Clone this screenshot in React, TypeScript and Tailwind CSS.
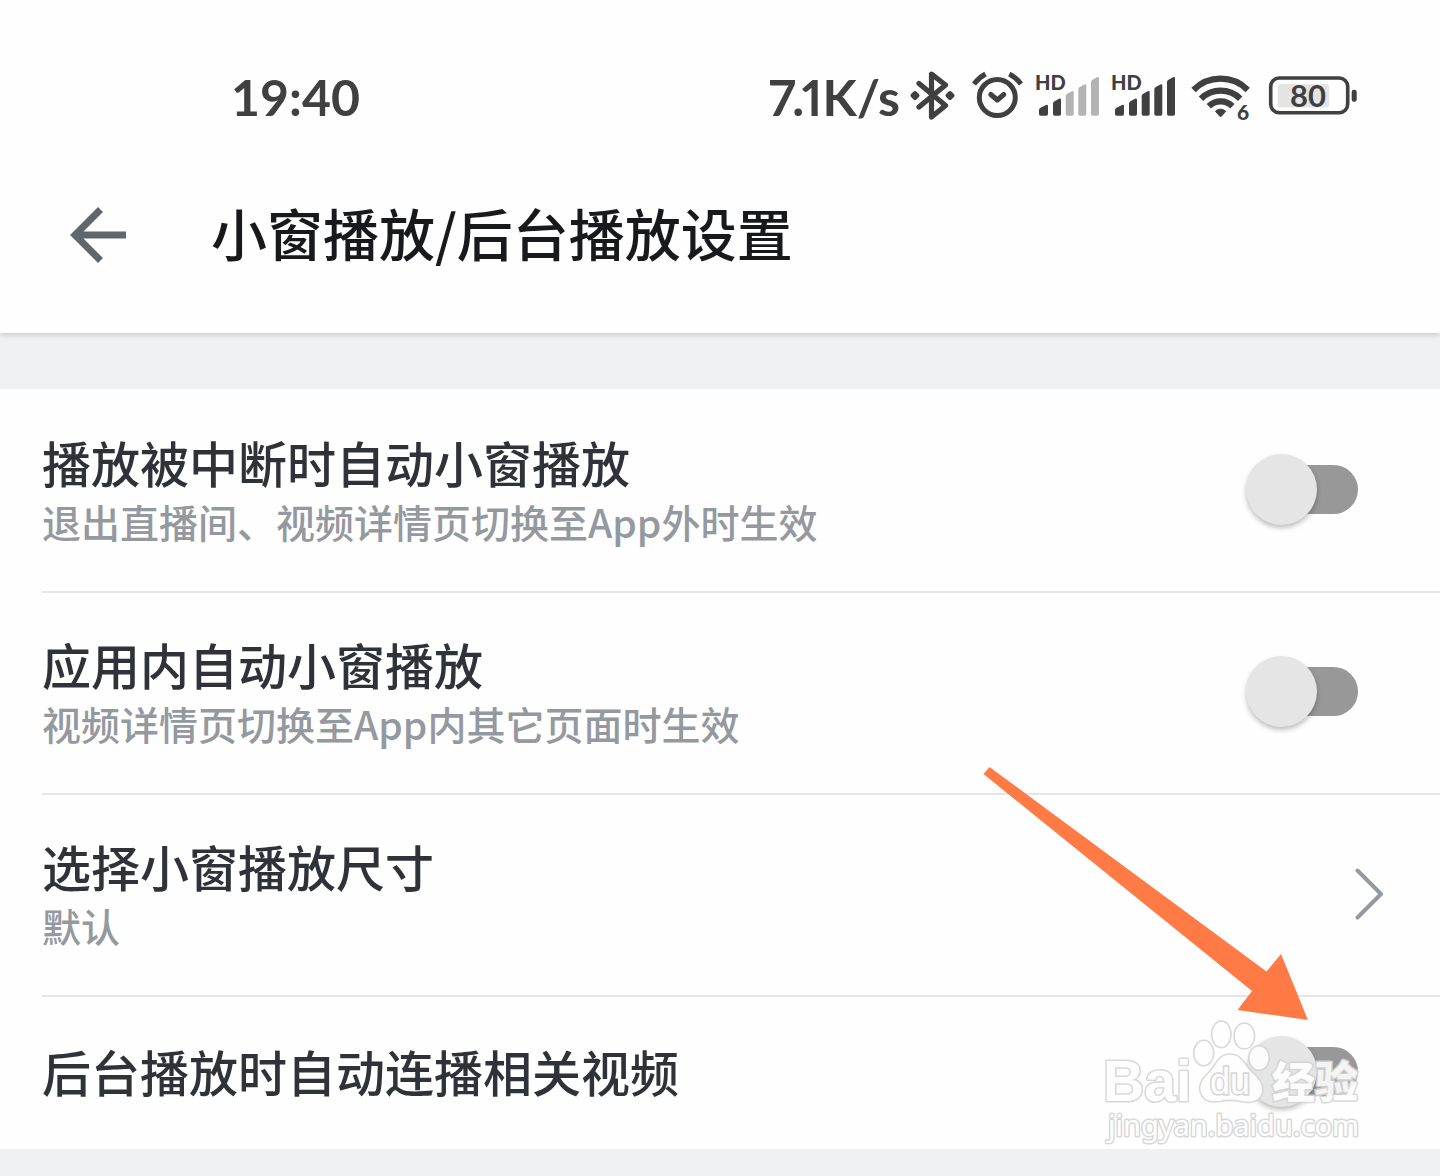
import { useId, useState } from "react";

function BluetoothIcon() {
  return (
    <svg width="54" height="56" viewBox="0 0 54 56" fill="none" aria-hidden="true">
      <path
        d="M11 14.5 37.5 36.5 23.5 48V5L37.5 16 11 38"
        stroke="#404040"
        strokeWidth="5.2"
        strokeLinecap="round"
        strokeLinejoin="round"
      />
      <path
        d="M7 24 9.500 26.500 7 29 4.500 26.500ZM42 24 44.500 26.500 42 29 39.500 26.500Z"
        fill="#404040"
        stroke="#404040"
        strokeWidth="4"
        strokeLinejoin="round"
      />
    </svg>
  );
}

function AlarmIcon() {
  return (
    <svg
      width="58"
      height="56"
      viewBox="0 0 58 56"
      fill="none"
      stroke="#404040"
      strokeWidth="5"
      strokeLinecap="round"
      strokeLinejoin="round"
      aria-hidden="true"
    >
      <circle cx="27.3" cy="28.6" r="18" />
      <path d="M20.8 25.5 27.3 31 33.8 25.5" />
      <path d="M4 15Q9 8.500 15.500 5M39.300 5Q46 8.500 51 15" strokeLinecap="butt" />
    </svg>
  );
}

const bars = [
  "M3 41 Q3 39.500 4.500 38.800L10 36Q12 35.300 12 37V45Q12 46.700 10.300 46.700H4.700Q3 46.700 3 45Z",
  "M17 34.500Q17 33 18.500 32.200L23 29.800Q25 29 25 31V45Q25 46.700 23.300 46.700H18.700Q17 46.700 17 45Z",
  "M29.700 27Q29.700 25.500 31.200 24.700L35.700 22.200Q37.700 21.400 37.700 23.400V45Q37.700 46.700 36 46.700H31.400Q29.700 46.700 29.700 45Z",
  "M42.300 20.400Q42.300 18.900 43.800 18.100L48.300 15.600Q50.300 14.800 50.300 16.800V45Q50.300 46.700 48.600 46.700H44Q42.300 46.700 42.300 45Z",
  "M55 13Q55 11.500 56.500 10.700L61 8.200Q63 7.400 63 9.400V45Q63 46.700 61.300 46.700H56.700Q55 46.700 55 45Z",
];

function SignalIcon({ level }: { level: number }) {
  return (
    <svg width="68" height="56" viewBox="0 0 68 56" aria-hidden="true">
      <text x="-1" y="21" fontSize="20" fontWeight="900" fill="#404040" fontFamily="Lato, sans-serif">
        HD
      </text>
      {bars.map((d, i) => (
        <path key={i} d={d} fill={i < level ? "#404040" : "#b3b3b3"} />
      ))}
    </svg>
  );
}

function WifiIcon() {
  return (
    <svg width="70" height="56" viewBox="0 0 70 56" fill="none" aria-hidden="true">
      <g stroke="#404040" strokeWidth="6.2">
        <path d="M5.500 21A38 38 0 0 1 59.700 21" />
        <path d="M13 29.700A28 28 0 0 1 52.200 29.700" />
        <path d="M20.800 37.200A17 17 0 0 1 44.400 37.200" />
      </g>
      <path
        d="M27.500 42.300Q32.600 38 37.700 42.300L33.600 47Q32.600 48 31.600 47Z"
        fill="#404040"
        stroke="#404040"
        strokeLinejoin="round"
      />
      <text x="49" y="50.500" fontSize="21" fontWeight="900" fill="#404040" fontFamily="Lato, sans-serif">
        6
      </text>
    </svg>
  );
}

function BatteryIcon() {
  return (
    <svg width="92" height="56" viewBox="0 0 92 56" fill="none" aria-hidden="true">
      <rect x="11.700" y="15" width="51.500" height="23.500" rx="3" fill="#e4e4e4" />
      <rect x="4.700" y="9" width="77" height="34.800" rx="8.500" stroke="#404040" strokeWidth="3.600" />
      <rect x="85.700" y="20.700" width="5" height="12" rx="2.200" fill="#404040" />
      <text
        x="42"
        y="38"
        textAnchor="middle"
        fontSize="31"
        fontWeight="700"
        fill="#404040"
        fontFamily="Lato, sans-serif"
      >
        80
      </text>
    </svg>
  );
}

function StatusBar() {
  return (
    <div className="flex h-[68px] items-center justify-between pr-[82px] pb-0.5 pl-[231px] font-['Lato',sans-serif] text-[50px] leading-none font-bold text-[#404040]">
      <span>19:40</span>
      <div className="flex items-center gap-2">
        <span className="proportional-nums">7.1K/s</span>
        <span className="flex items-center gap-2">
          <BluetoothIcon />
          <AlarmIcon />
          <SignalIcon level={2} />
          <SignalIcon level={5} />
          <WifiIcon />
          <BatteryIcon />
        </span>
      </div>
    </div>
  );
}

function Switch({ id }: { id: string }) {
  const [on, setOn] = useState(false);
  return (
    <span className="relative flex h-[72px] w-28 shrink-0 items-center">
      <input
        id={id}
        type="checkbox"
        role="switch"
        checked={on}
        onChange={(e) => setOn(e.target.checked)}
        className="peer absolute inset-0 z-10 m-0 h-full w-full cursor-pointer opacity-0"
      />
      <span className="ml-3 h-[49px] w-[100px] rounded-full bg-[#989898] peer-checked:bg-[#ffb3ca]" />
      <span className="absolute left-0 size-[71px] rounded-full bg-[#e5e5e5] shadow-[0_3px_5px_rgba(0,0,0,0.25)] peer-checked:left-[41px] peer-checked:bg-[#ff6699]" />
    </span>
  );
}

function RowText({ title, note }: { title: string; note?: string }) {
  return (
    <span className={note ? "flex flex-col pt-1" : "flex flex-col"}>
      <span className="text-[49px] leading-[60px] font-medium text-[#2f3238]">{title}</span>
      {note && <span className="text-[39px] leading-[58px] font-medium text-[#9499a0]">{note}</span>}
    </span>
  );
}

function SwitchRow({ title, note }: { title: string; note?: string }) {
  const id = useId();
  return (
    <div
      className={
        note
          ? "ml-[42px] flex h-[202px] items-center justify-between border-b-2 border-[#e3e5e7] pr-[82px] pb-1"
          : "ml-[42px] flex h-[152px] items-center justify-between pr-[82px] pb-1"
      }
    >
      <label htmlFor={id}>
        <RowText title={title} note={note} />
      </label>
      <Switch id={id} />
    </div>
  );
}

function PointerArrow() {
  return (
    <svg
      className="pointer-events-none absolute top-[377px] right-[131px]"
      width="326"
      height="256"
      viewBox="0 0 326 256"
      aria-hidden="true"
    >
      <path d="M0.500 8 6.500 1 283.500 205.500 298 188 325 254 254.500 244 269 225Z" fill="#ff7a45" />
    </svg>
  );
}

function Watermark() {
  return (
    <svg
      className="pointer-events-none absolute right-[74px] bottom-0.5 opacity-90"
      width="266"
      height="130"
      viewBox="0 0 266 130"
      fill="#ffffff"
      stroke="#d4d4d4"
      strokeWidth="1.500"
      role="img"
      aria-label="Baidu 经验"
    >
      <g strokeWidth="3" paintOrder="stroke" strokeLinejoin="round">
        <text x="3" y="84" fontSize="57" fontWeight="700" fontFamily="Liberation Sans, sans-serif">
          Bai
        </text>
        <text x="172" y="81" fontSize="43" fontWeight="900" fontFamily="Noto Sans CJK SC, sans-serif">
          经验
        </text>
        <text x="8" y="119" fontSize="29" fontFamily="Noto Sans, sans-serif">
          jingyan.baidu.com
        </text>
      </g>
      <ellipse cx="103.700" cy="36" rx="10" ry="12.700" />
      <ellipse cx="121.300" cy="17.300" rx="9.700" ry="13.300" />
      <ellipse cx="144.300" cy="19" rx="10.300" ry="13" />
      <ellipse cx="159" cy="41" rx="10.300" ry="12.300" />
      <path d="M130 37C118 37 116 48 109 55C102 61 98 67 100 75C103 85 112 86 120 84.500C127 83 134 83 141 84.500C150 87 160 85 162.500 76C164 67 159 61 152 55C145 48 142 37 130 37Z" />
      <text
        x="110"
        y="77"
        fontSize="36"
        fontFamily="Liberation Sans, sans-serif"
        strokeWidth="3.400"
        paintOrder="stroke"
      >
        du
      </text>
    </svg>
  );
}

export default function App() {
  return (
    <div className="min-h-screen bg-[#f0f1f3] font-['Noto_Sans_CJK_SC',sans-serif]">
      <header className="relative bg-[#fefefe] pt-16 pb-[58px] shadow-[0_2px_6px_rgba(0,0,0,0.16)]">
        <StatusBar />
        <div className="mt-[62px] flex h-[81px] items-center gap-[85px] pl-[70px]">
          <button type="button" aria-label="返回" className="cursor-pointer">
            <svg width="56" height="56" viewBox="0 0 56 56" fill="none" aria-hidden="true">
              <path d="M56 28H6M30.500 2.500 5 28 30.500 53.500" stroke="#61666d" strokeWidth="7" />
            </svg>
          </button>
          <h1 className="pb-1.5 text-[56px] leading-[75px] font-medium text-[#18191c]">
            小窗播放/后台播放设置
          </h1>
        </div>
      </header>

      <main className="relative mt-14 bg-[#fefefe] pt-0.5">
        <SwitchRow title="播放被中断时自动小窗播放" note="退出直播间、视频详情页切换至App外时生效" />
        <SwitchRow title="应用内自动小窗播放" note="视频详情页切换至App内其它页面时生效" />
        <div className="ml-[42px] h-[202px] border-b-2 border-[#e3e5e7]">
          <button
            type="button"
            className="flex h-full w-full cursor-pointer items-center justify-between pr-[55px] pb-1 text-left"
          >
            <RowText title="选择小窗播放尺寸" note="默认" />
            <svg width="31" height="54" viewBox="0 0 31 54" fill="none" aria-hidden="true">
              <path
                d="M3.500 4.500 27 28 3.500 51.500"
                stroke="#9499a0"
                strokeWidth="4"
                strokeLinecap="round"
                strokeLinejoin="round"
              />
            </svg>
          </button>
        </div>
        <SwitchRow title="后台播放时自动连播相关视频" />
        <PointerArrow />
        <Watermark />
      </main>
    </div>
  );
}
